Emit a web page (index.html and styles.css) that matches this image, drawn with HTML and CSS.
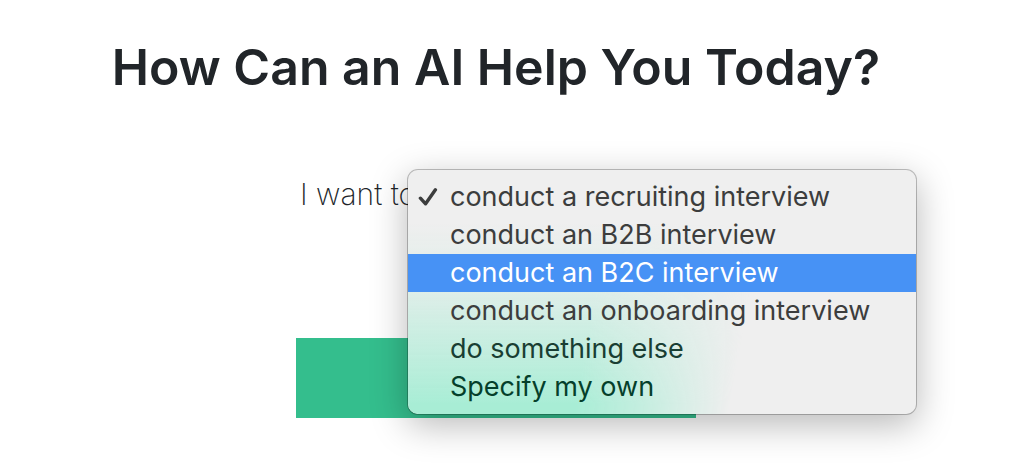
FILE: index.html
```html
<!DOCTYPE html>
<html lang="en">
<head>
<meta charset="utf-8">
<meta name="viewport" content="width=device-width, initial-scale=1">
<title>How Can an AI Help You Today?</title>
<link rel="stylesheet" href="styles.css">
</head>
<body>
<main class="page">
  <h1 class="title">How Can an AI Help You Today?</h1>
  <form class="request">
    <div class="sentence">
      <label class="sentence-label" for="task">I want to</label>
      <select class="task-select" id="task">
        <option>conduct a recruiting interview</option>
      </select>
    </div>
    <button class="submit" type="submit" aria-label="Start"></button>
    <div class="menu" role="listbox" aria-label="Task">
      <button class="menu-item" type="button" role="option" aria-selected="true">
        <svg class="check" viewBox="0 0 20 20" aria-hidden="true"><path d="M2.4 12.2 7.6 17.8 17.4 3.8"/></svg>
        conduct a recruiting interview
      </button>
      <button class="menu-item" type="button" role="option">conduct an B2B interview</button>
      <button class="menu-item menu-item-active" type="button" role="option">conduct an B2C interview</button>
      <button class="menu-item" type="button" role="option">conduct an onboarding interview</button>
      <button class="menu-item menu-item-tinted" type="button" role="option">do something else</button>
      <button class="menu-item menu-item-deep" type="button" role="option">Specify my own</button>
    </div>
  </form>
</main>
</body>
</html>
```
FILE: styles.css
```css
* { box-sizing: border-box; }

body {
  margin: 0;
  background: #fff;
  color: #212529;
  font-family: Inter, "Liberation Sans", sans-serif;
}

.page {
  padding: 35px 38px 56px 0;
}

.title {
  margin: 0;
  font-size: 50px;
  line-height: 64px;
  font-weight: 600;
  text-align: center;
}

.request {
  position: relative;
  width: 400px;
  max-width: 100%;
  margin: 77px auto 0;
}

.sentence {
  display: flex;
  align-items: center;
  gap: 8px;
  padding: 0 0 2px 4px;
  height: 38px;
}

.sentence-label {
  flex: none;
  font-size: 30px;
  font-weight: 200;
}

.task-select {
  flex: 1;
  min-width: 0;
  border: 0;
  background: transparent;
  color: inherit;
  font: inherit;
}

.submit {
  display: block;
  width: 100%;
  height: 80px;
  margin-top: 124px;
  border: 0;
  background: #34be8d;
}

.menu {
  position: absolute;
  top: -7px;
  left: 111px;
  min-width: 510px;
  padding: 8px 0;
  border: 1px solid rgba(0, 0, 0, 0.24);
  border-radius: 11px;
  background: #efefef;
  background-clip: padding-box;
  box-shadow: 0 10px 36px rgba(0, 0, 0, 0.28);
}

.menu::before {
  content: "";
  position: absolute;
  inset: 0;
  border-radius: 10px;
  background: linear-gradient(to bottom, rgba(168, 237, 213, 0) 22%, rgba(168, 237, 213, 0.24) 50%, rgba(168, 237, 213, 0.6) 73%, #a8edd5 96%);
  mask-image: linear-gradient(100deg, #000 38%, rgba(0, 0, 0, 0.6) 50%, transparent 66%);
}

.menu-item {
  position: relative;
  display: flex;
  align-items: center;
  width: 100%;
  height: 38px;
  padding: 0 42px 2px;
  border: 0;
  background: transparent;
  color: #3c3d3d;
  font-family: inherit;
  font-size: 27px;
  text-align: left;
  white-space: nowrap;
}

.menu-item-active {
  background: #4792f5;
  color: #fff;
}

.menu-item-tinted { color: #193e33; }

.menu-item-deep { color: #053f2b; }

.check {
  position: absolute;
  left: 10px;
  width: 20px;
  height: 20px;
  fill: none;
  stroke: currentColor;
  stroke-width: 3.4;
  stroke-linecap: round;
  stroke-linejoin: round;
}
```
